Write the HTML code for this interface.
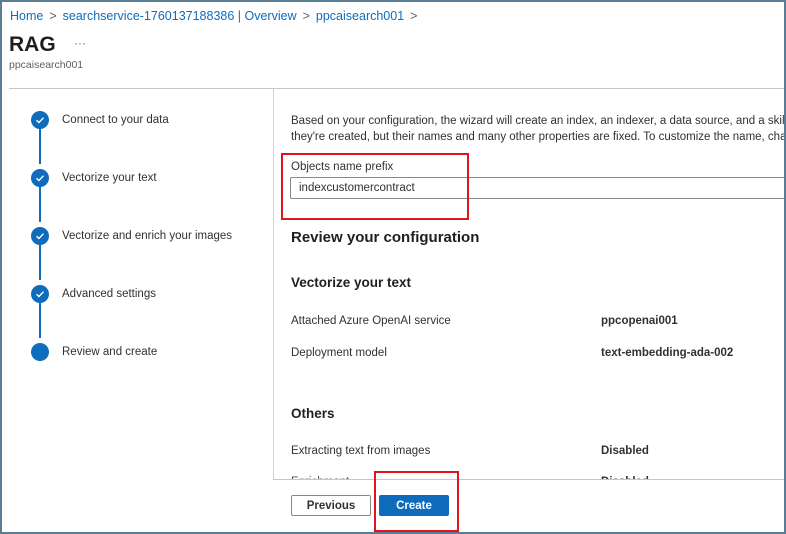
<!DOCTYPE html>
<html><head><meta charset="utf-8"><style>
*{margin:0;padding:0;box-sizing:border-box}
body{width:786px;height:534px;overflow:hidden;background:#fff;font-family:"Segoe UI","Liberation Sans",sans-serif;color:#323130;position:relative}
.frame{position:absolute;left:0;top:0;width:786px;height:534px;border:2px solid #5a7d96}
.a{position:absolute;white-space:nowrap}
.bc{top:9px;left:10px;font-size:12.5px;color:#0f6cbd}
.bc span{color:#605e5c;margin:0 6px}
.step{left:62px;font-size:11.5px;color:#323130}
.circ{position:absolute;left:31px;width:18px;height:18px;border-radius:50%;background:#0f6cbd}
.line{position:absolute;left:39px;width:2px;background:#0f6cbd}
.lbl{left:291px;font-size:11.5px}
.val{left:601px;font-size:11.5px;font-weight:bold}
.h2{left:291px;font-size:13.5px;font-weight:600;color:#201f1e}
.btn{display:flex;align-items:center;justify-content:center}
</style></head><body>
<div class="a bc">Home<span>&gt;</span>searchservice-1760137188386 | Overview<span>&gt;</span>ppcaisearch001<span>&gt;</span></div>
<div class="a" style="top:33px;left:9px;font-size:21px;font-weight:600;color:#201f1e">RAG</div>
<div class="a" style="top:36px;left:74px;font-size:12px;color:#605e5c">···</div>
<div class="a" style="top:59px;left:9px;font-size:10.5px;color:#605e5c">ppcaisearch001</div>
<div class="a" style="top:88px;left:9px;width:777px;height:1px;background:#c8c6c4"></div>
<div class="a" style="top:88px;left:273px;width:1px;height:432px;background:#d2d0ce"></div>

<div class="line" style="top:127px;height:37px"></div>
<div class="line" style="top:185px;height:37px"></div>
<div class="line" style="top:243px;height:37px"></div>
<div class="line" style="top:301px;height:37px"></div>
<svg class="circ" style="top:111px" viewBox="0 0 18 18"><path d="M5.5 9.2l2.4 2.3 4.6-4.8" stroke="#fff" stroke-width="1.4" fill="none"/></svg>
<svg class="circ" style="top:169px" viewBox="0 0 18 18"><path d="M5.5 9.2l2.4 2.3 4.6-4.8" stroke="#fff" stroke-width="1.4" fill="none"/></svg>
<svg class="circ" style="top:227px" viewBox="0 0 18 18"><path d="M5.5 9.2l2.4 2.3 4.6-4.8" stroke="#fff" stroke-width="1.4" fill="none"/></svg>
<svg class="circ" style="top:285px" viewBox="0 0 18 18"><path d="M5.5 9.2l2.4 2.3 4.6-4.8" stroke="#fff" stroke-width="1.4" fill="none"/></svg>
<div class="circ" style="top:343px"></div>
<div class="a step" style="top:114px">Connect to your data</div>
<div class="a step" style="top:172px">Vectorize your text</div>
<div class="a step" style="top:230px">Vectorize and enrich your images</div>
<div class="a step" style="top:288px">Advanced settings</div>
<div class="a step" style="top:346px">Review and create</div>

<div class="a" style="top:113px;left:291px;font-size:11.5px;line-height:16px;color:#323130">Based on your configuration, the wizard will create an index, an indexer, a data source, and a skillset<br>they're created, but their names and many other properties are fixed. To customize the name, change</div>
<div class="a" style="top:161px;left:291px;font-size:11.5px">Objects name prefix</div>
<div class="a" style="top:177px;left:290px;width:500px;height:22px;border:1px solid #8a8886;border-radius:2px;font-size:11.5px;padding:4px 8px">indexcustomercontract</div>
<div class="a" style="top:153px;left:281px;width:188px;height:67px;border:2px solid #e3131b"></div>
<div class="a h2" style="top:229px;font-size:15px">Review your configuration</div>
<div class="a h2" style="top:275px">Vectorize your text</div>
<div class="a lbl" style="top:315px">Attached Azure OpenAI service</div>
<div class="a val" style="top:315px">ppcopenai001</div>
<div class="a lbl" style="top:347px">Deployment model</div>
<div class="a val" style="top:347px">text-embedding-ada-002</div>
<div class="a h2" style="top:406px">Others</div>
<div class="a lbl" style="top:445px">Extracting text from images</div>
<div class="a val" style="top:445px">Disabled</div>
<div class="a lbl" style="top:476px;color:#555">Enrichment</div>
<div class="a val" style="top:476px">Disabled</div>
<div class="a" style="top:479px;left:273px;width:513px;height:42px;background:#fff;border-top:1px solid #c8c6c4"></div>
<div class="a btn" style="top:495px;left:291px;width:80px;height:21px;border:1px solid #8a8886;border-radius:2px;font-size:11.5px;font-weight:600">Previous</div>
<div class="a btn" style="top:495px;left:379px;width:70px;height:21px;background:#0f6cbd;border-radius:2px;font-size:11.5px;font-weight:600;color:#fff">Create</div>
<div class="a" style="top:471px;left:374px;width:85px;height:61px;border:2px solid #e3131b"></div>
<div class="frame"></div>
</body></html>
